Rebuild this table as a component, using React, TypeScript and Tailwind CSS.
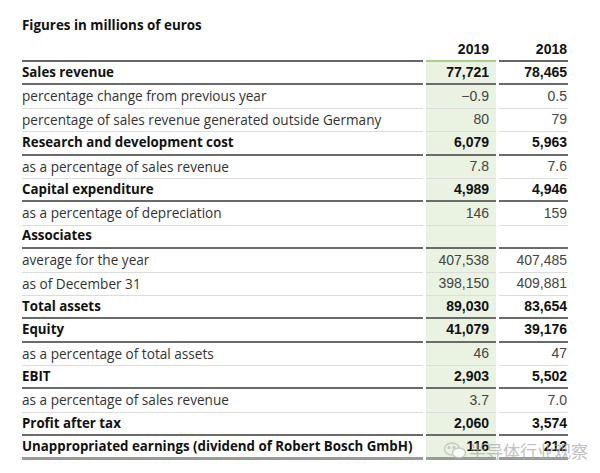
import React from "react";

type Row = { label: string; a: string; b: string; bold?: boolean; last?: boolean };

const rows: Row[] = [
  { label: "Sales revenue", a: "77,721", b: "78,465", bold: true },
  { label: "percentage change from previous year", a: "\u22120.9", b: "0.5" },
  { label: "percentage of sales revenue generated outside Germany", a: "80", b: "79" },
  { label: "Research and development cost", a: "6,079", b: "5,963", bold: true },
  { label: "as a percentage of sales revenue", a: "7.8", b: "7.6" },
  { label: "Capital expenditure", a: "4,989", b: "4,946", bold: true },
  { label: "as a percentage of depreciation", a: "146", b: "159" },
  { label: "Associates", a: "", b: "", bold: true },
  { label: "average for the year", a: "407,538", b: "407,485" },
  { label: "as of December 31", a: "398,150", b: "409,881" },
  { label: "Total assets", a: "89,030", b: "83,654", bold: true },
  { label: "Equity", a: "41,079", b: "39,176", bold: true },
  { label: "as a percentage of total assets", a: "46", b: "47" },
  { label: "EBIT", a: "2,903", b: "5,502", bold: true },
  { label: "as a percentage of sales revenue", a: "3.7", b: "7.0" },
  { label: "Profit after tax", a: "2,060", b: "3,574", bold: true },
  { label: "Unappropriated earnings (dividend of Robert Bosch GmbH)", a: "116", b: "212", bold: true, last: true },
];

export default function App() {
  return (
    <div className="w-[600px] h-[473px] bg-white relative overflow-hidden" style={{ fontFamily: '"Open Sans", "Noto Sans", sans-serif' }}>
      <div className="pl-[22px] pt-[14px]">
        <div className="text-[13.4px] font-bold text-[#111] leading-[22px]">Figures in millions of euros</div>
        <div className="mt-[3px] w-[546px]">
          {/* header */}
          <div className="grid grid-cols-[401px_70px_69px] gap-x-[3px] h-[23px]" style={{ fontFamily: '"Liberation Sans", Arial, sans-serif' }}>
            <div className="border-b-[2px] border-[#666]" />
            <div className="border-b-[2px] border-[#a6cf8a] text-right pr-[7px] text-[14px] font-bold text-[#111] leading-[21px]">2019</div>
            <div className="border-b-[2px] border-[#666] text-right pr-[1px] text-[14px] font-bold text-[#111] leading-[21px]">2018</div>
          </div>
          {rows.map((r, i) => {
            const line = r.last
              ? "border-b-[3px] border-[#9a9a9a]"
              : r.bold
              ? "border-b-[2px] border-[#6a6a6a]"
              : "border-b border-[#dcdcdc]";
            return (
              <div key={i} className="grid grid-cols-[401px_70px_69px] gap-x-[3px] h-[23.4px]">
                <div className={`${line} flex items-center ${r.bold ? "text-[13.3px] font-bold text-[#111]" : "text-[13.6px] text-[#333]"} whitespace-nowrap`}>
                  {r.label}
                </div>
                <div
                  className={`${line} bg-[#eaf2e2] flex items-center justify-end pr-[7px] text-[14px] ${r.bold ? "font-bold text-[#111]" : "text-[#444]"}`}
                  style={{ fontFamily: '"Liberation Sans", Arial, sans-serif' }}
                >
                  {r.a}
                </div>
                <div
                  className={`${line} flex items-center justify-end pr-[1px] text-[14px] ${r.bold ? "font-bold text-[#111]" : "text-[#444]"}`}
                  style={{ fontFamily: '"Liberation Sans", Arial, sans-serif' }}
                >
                  {r.b}
                </div>
              </div>
            );
          })}
        </div>
      </div>
      {/* watermark */}
      <div className="absolute left-[443px] top-[438px] flex items-center gap-[2px] opacity-70">
        <svg width="24" height="20" viewBox="0 0 24 20" fill="none" stroke="#b8b8b8" strokeWidth="1.4">
          <ellipse cx="9" cy="8" rx="7.5" ry="6" />
          <ellipse cx="16" cy="12" rx="6.5" ry="5" fill="white" />
          <circle cx="6" cy="6.5" r="0.9" fill="#b8b8b8" />
          <circle cx="11" cy="6.5" r="0.9" fill="#b8b8b8" />
        </svg>
        <span className="text-[17px] text-[#a8a8a8]" style={{ fontFamily: '"Noto Sans CJK SC", sans-serif' }}>半导体行业观察</span>
      </div>
    </div>
  );
}
